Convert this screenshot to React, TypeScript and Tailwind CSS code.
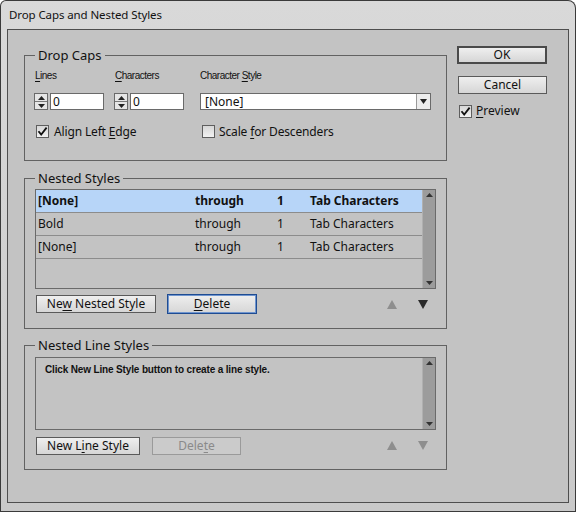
import React from "react";

const F = "font-['Noto_Sans',sans-serif]";
const S = "font-['Liberation_Sans',sans-serif]";

function U({ children }: { children: React.ReactNode }) {
  return <span className="underline underline-offset-[2px] decoration-1">{children}</span>;
}

function Check({ checked }: { checked?: boolean }) {
  return (
    <span className="w-[13px] h-[13px] shrink-0 border border-[#5e5e5e] bg-linear-to-b from-[#d6d6d6] to-[#f2f2f2] flex items-center justify-center">
      {checked && (
        <svg width="11" height="11" viewBox="0 0 11 11">
          <path d="M1.5 5.2 L4.2 8.6 L9.6 1.6" stroke="#111" strokeWidth="1.8" fill="none" />
        </svg>
      )}
    </span>
  );
}

function Spin() {
  return (
    <span className="w-[14px] h-[17px] border border-[#6a6a6a] bg-[#e6e6e6] flex flex-col">
      <span className="flex-1 flex items-center justify-center border-b border-[#7a7a7a]">
        <svg width="7" height="4" viewBox="0 0 7 4"><path d="M0 4 L3.5 0 L7 4Z" fill="#222" /></svg>
      </span>
      <span className="flex-1 flex items-center justify-center">
        <svg width="7" height="4" viewBox="0 0 7 4"><path d="M0 0 L3.5 4 L7 0Z" fill="#222" /></svg>
      </span>
    </span>
  );
}

function Group({ title, className, children }: { title: string; className: string; children: React.ReactNode }) {
  return (
    <div className={`relative border border-[#626262] ${className}`}>
      <span className={`absolute -top-[9px] left-[10px] px-[3px] bg-[#c3c3c3] text-[13px] leading-[16px] text-[#111] ${F}`}>{title}</span>
      {children}
    </div>
  );
}

function Btn({ children, className = "", disabled }: { children: React.ReactNode; className?: string; disabled?: boolean }) {
  return (
    <div
      className={`h-[18px] flex items-center justify-center border ${
        disabled ? "border-[#9a9a9a] text-[#8a8a8a] bg-[#cbcbcb]" : "border-[#5a5a5a] text-[#111] bg-linear-to-b from-[#efefef] to-[#d6d6d6]"
      } text-[12px] leading-[16px] ${F} ${className}`}
    >
      <span className="whitespace-pre">{children}</span>
    </div>
  );
}

function Arrows({ upDisabled, downDisabled }: { upDisabled?: boolean; downDisabled?: boolean }) {
  return (
    <div className="ml-auto flex items-center gap-[21px] mr-[8px]">
      <svg width="10" height="9" viewBox="0 0 10 9"><path d="M0 9 L5 0 L10 9Z" fill={upDisabled ? "#8e8e8e" : "#2a2a2a"} /></svg>
      <svg width="10" height="9" viewBox="0 0 10 9"><path d="M0 0 L5 9 L10 0Z" fill={downDisabled ? "#8e8e8e" : "#2a2a2a"} /></svg>
    </div>
  );
}

function Scrollbar() {
  return (
    <div className="w-[13px] bg-[#9c9c9c] border-l border-[#b0b0b0] flex flex-col justify-between items-center py-[3px]">
      <svg width="7" height="4" viewBox="0 0 7 4"><path d="M0 4 L3.5 0 L7 4Z" fill="#333" /></svg>
      <svg width="7" height="4" viewBox="0 0 7 4"><path d="M0 0 L3.5 4 L7 0Z" fill="#333" /></svg>
    </div>
  );
}

function Row({ cells, bold, hi }: { cells: string[]; bold?: boolean; hi?: boolean }) {
  return (
    <div className={`h-[23px] flex items-center border-b border-[#8c8c8c] ${hi ? "bg-[#b7d5f8]" : ""} ${bold ? "font-bold" : ""} text-[12px] text-[#111] ${F}`}>
      <span className="w-[159px] pl-[2px]">{cells[0]}</span>
      <span className="w-[82px]">{cells[1]}</span>
      <span className="w-[33px]">{cells[2]}</span>
      <span>{cells[3]}</span>
    </div>
  );
}

export default function App() {
  return (
    <div className="w-[576px] h-[512px] bg-[#3a3a3a] rounded-tl-[6px] rounded-tr-[8px] p-[1px] flex flex-col overflow-hidden">
      <div className="flex-1 flex flex-col rounded-tl-[5px] rounded-tr-[7px] bg-linear-to-b from-[#d9d9d9] to-[#c9c9c9] px-[6px] pb-[8px]">
        <div className={`h-[28px] flex items-center pl-[2px] text-[11.5px] tracking-[-0.1px] text-[#111] ${F}`}>Drop Caps and Nested Styles</div>
        <div className="flex-1 border border-[#4e4e4e] bg-[#c3c3c3] flex">
          {/* left column */}
          <div className="pl-[16px] w-[439px] flex flex-col">
            <Group title="Drop Caps" className="mt-[25px] h-[106px]">
              <div className="pl-[9px] pt-[14px] flex flex-col">
                <div className={`flex text-[10px] leading-[12px] tracking-[-0.5px] text-[#111] ${S}`}>
                  <span className="w-[80px] pl-[1px]"><U>L</U>ines</span>
                  <span className="w-[86px] pl-[1px]"><U>C</U>haracters</span>
                  <span>Character <U>S</U>tyle</span>
                </div>
                <div className="flex mt-[11px] h-[17px]">
                  <div className="w-[80px] flex gap-[2px]">
                    <Spin />
                    <div className={`w-[54px] h-[17px] bg-white border border-[#6a6a6a] text-[12px] leading-[15px] pl-[2px] text-[#111] ${F}`}>0</div>
                  </div>
                  <div className="w-[86px] flex gap-[2px]">
                    <Spin />
                    <div className={`w-[54px] h-[17px] bg-white border border-[#6a6a6a] text-[12px] leading-[15px] pl-[2px] text-[#111] ${F}`}>0</div>
                  </div>
                  <div className="w-[231px] h-[17px] bg-white border border-[#6a6a6a] flex">
                    <span className={`flex-1 text-[12px] leading-[15px] pl-[4px] text-[#111] ${F}`}>[None]</span>
                    <span className="w-[14px] border-l border-[#9a9a9a] bg-[#ededed] flex items-center justify-center">
                      <svg width="7" height="5" viewBox="0 0 7 5"><path d="M0 0 L3.5 5 L7 0Z" fill="#222" /></svg>
                    </span>
                  </div>
                </div>
                <div className={`flex mt-[15px] h-[13px] items-center text-[12px] tracking-[-0.15px] text-[#111] ${F}`}>
                  <div className="w-[166px] flex items-center gap-[5px] pl-[2px]">
                    <Check checked />
                    <span>Align Left <U>E</U>dge</span>
                  </div>
                  <div className="flex items-center gap-[4px] pl-[2px]">
                    <Check />
                    <span>Scale <U>f</U>or Descenders</span>
                  </div>
                </div>
              </div>
            </Group>

            <Group title="Nested Styles" className="mt-[17px] h-[151px]">
              <div className="pl-[10px] pt-[10px] flex flex-col">
                <div className="w-[401px] h-[100px] border border-[#6a6a6a] flex">
                  <div className="flex-1 flex flex-col">
                    <Row cells={["[None]", "through", "1", "Tab Characters"]} bold hi />
                    <Row cells={["Bold", "through", "1", "Tab Characters"]} />
                    <Row cells={["[None]", "through", "1", "Tab Characters"]} />
                  </div>
                  <Scrollbar />
                </div>
                <div className="flex items-center mt-[5px] h-[20px] w-[401px]">
                  <Btn className="w-[120px] ml-[1px]">Ne<U>w</U> Nested Style</Btn>
                  <div className="ml-[11px] h-[20px] w-[90px] border border-[#1f4c92] shadow-[inset_0_0_0_1px_#6f95cf] bg-linear-to-b from-[#efefef] to-[#d6d6d6] flex items-center justify-center">
                    <span className={`text-[12px] text-[#111] ${F}`}><U>D</U>elete</span>
                  </div>
                  <Arrows upDisabled />
                </div>
              </div>
            </Group>

            <Group title="Nested Line Styles" className="mt-[16px] h-[125px]">
              <div className="pl-[10px] pt-[11px] flex flex-col">
                <div className="w-[401px] h-[73px] border border-[#6a6a6a] flex">
                  <div className={`flex-1 pl-[9px] pt-[4px] text-[10px] font-bold tracking-[-0.15px] text-[#111] ${S}`}>
                    Click New Line Style button to create a line style.
                  </div>
                  <Scrollbar />
                </div>
                <div className="flex items-center mt-[6px] h-[19px] w-[401px]">
                  <Btn className="w-[104px] ml-[1px]">New L<U>i</U>ne Style</Btn>
                  <Btn className="w-[89px] ml-[12px]" disabled>Dele<U>t</U>e</Btn>
                  <Arrows upDisabled downDisabled />
                </div>
              </div>
            </Group>
          </div>

          {/* right column */}
          <div className="pl-[10px] pt-[16px] flex flex-col">
            <div className={`w-[90px] h-[18px] border-2 border-[#4a4a4a] bg-linear-to-b from-[#efefef] to-[#d6d6d6] flex items-center justify-center text-[12px] text-[#111] ${F}`}>OK</div>
            <Btn className="w-[89px] ml-[1px] mt-[12px]">Cancel</Btn>
            <div className={`flex items-center gap-[4px] ml-[2px] mt-[8px] text-[12px] text-[#111] ${F}`}>
              <Check checked />
              <span><U>P</U>review</span>
            </div>
          </div>
        </div>
      </div>
    </div>
  );
}
